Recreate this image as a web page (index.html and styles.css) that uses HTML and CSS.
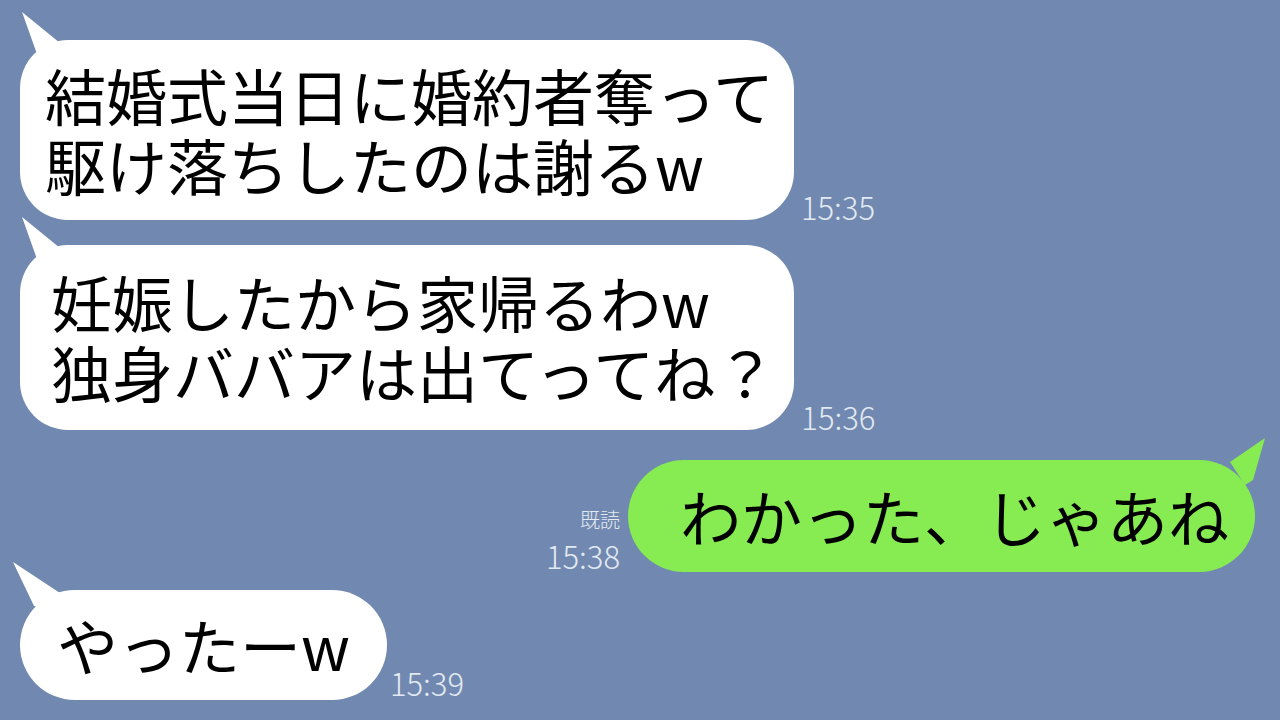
FILE: index.html
```html
<!DOCTYPE html>
<html lang="ja">
<head>
<meta charset="utf-8">
<title>chat</title>
<link rel="stylesheet" href="styles.css">
</head>
<body>
<div class="chat">
  <div class="row row-in r1">
    <div class="bubble bubble-in b1">結婚式当日に婚約者奪って<br>駆け落ちしたのは謝るw</div>
    <div class="meta"><span class="time">15:35</span></div>
  </div>
  <div class="row row-in r2">
    <div class="bubble bubble-in b2">妊娠したから家帰るわw<br>独身ババアは出てってね？</div>
    <div class="meta"><span class="time">15:36</span></div>
  </div>
  <div class="row row-out r3">
    <div class="meta meta-out"><span class="read">既読</span><span class="time">15:38</span></div>
    <div class="bubble bubble-out b3">わかった、じゃあね</div>
  </div>
  <div class="row row-in r4">
    <div class="bubble bubble-in b4">やったーw</div>
    <div class="meta meta-tight"><span class="time">15:39</span></div>
  </div>
</div>
</body>
</html>
```

FILE: styles.css
```css
html, body {
  margin: 0;
  padding: 0;
}
body {
  width: 1280px;
  height: 720px;
  overflow: hidden;
  background: #7189b0;
  font-family: "Noto Sans CJK JP", "Noto Sans", sans-serif;
  color: #000;
}
.chat {
  display: flex;
  flex-direction: column;
  padding: 40px 25px 0 20px;
}
.row {
  display: flex;
  align-items: flex-end;
  gap: 7px;
}
.row-out {
  justify-content: flex-end;
  gap: 8px;
}
.r2 { margin-top: 25px; }
.r3 { margin-top: 30px; }
.r4 { margin-top: 18px; }

.bubble {
  position: relative;
  font-size: 61px;
  line-height: 70px;
  padding: 20px 24px;
  border-radius: 48px;
  white-space: nowrap;
}
.bubble-in {
  background: #fff;
}
.bubble-in::before {
  content: "";
  position: absolute;
  left: 0;
  top: -30px;
  width: 45px;
  height: 50px;
  background: #fff;
  clip-path: polygon(2px 2px, 40px 33px, 30px 50px, 17px 44px);
}
.b4::before {
  left: -8px;
  width: 53px;
  clip-path: polygon(1px 2px, 48px 33px, 38px 50px, 22px 46px);
}
.bubble-out {
  background: #87ec52;
  border-radius: 56px;
}
.bubble-out::before {
  content: "";
  position: absolute;
  right: -15px;
  top: -25px;
  width: 45px;
  height: 50px;
  background: #87ec52;
  clip-path: polygon(40px 3px, 5px 27px, 20px 50px, 28px 45px);
}
.b1 { padding: 20px 20px 20px 25px; }
.b2 { padding: 22px 18px 23px 31px; }
.b3 { padding: 21px 26px 21px 52px; }
.b4 { padding: 20px 37px 20px 37px; border-radius: 55px; }

.meta {
  display: flex;
  flex-direction: column;
  align-items: flex-end;
  margin-bottom: -2px;
}
.meta-out {
  margin-bottom: 1px;
}
.meta-tight {
  margin-bottom: 2px;
  margin-left: -4px;
}
.time {
  font-size: 31px;
  line-height: 31px;
  font-weight: 300;
  color: #e2e9f2;
}
.read {
  font-size: 20px;
  line-height: 22px;
  font-weight: 300;
  color: #e2e9f2;
  margin-bottom: 9px;
}
```
